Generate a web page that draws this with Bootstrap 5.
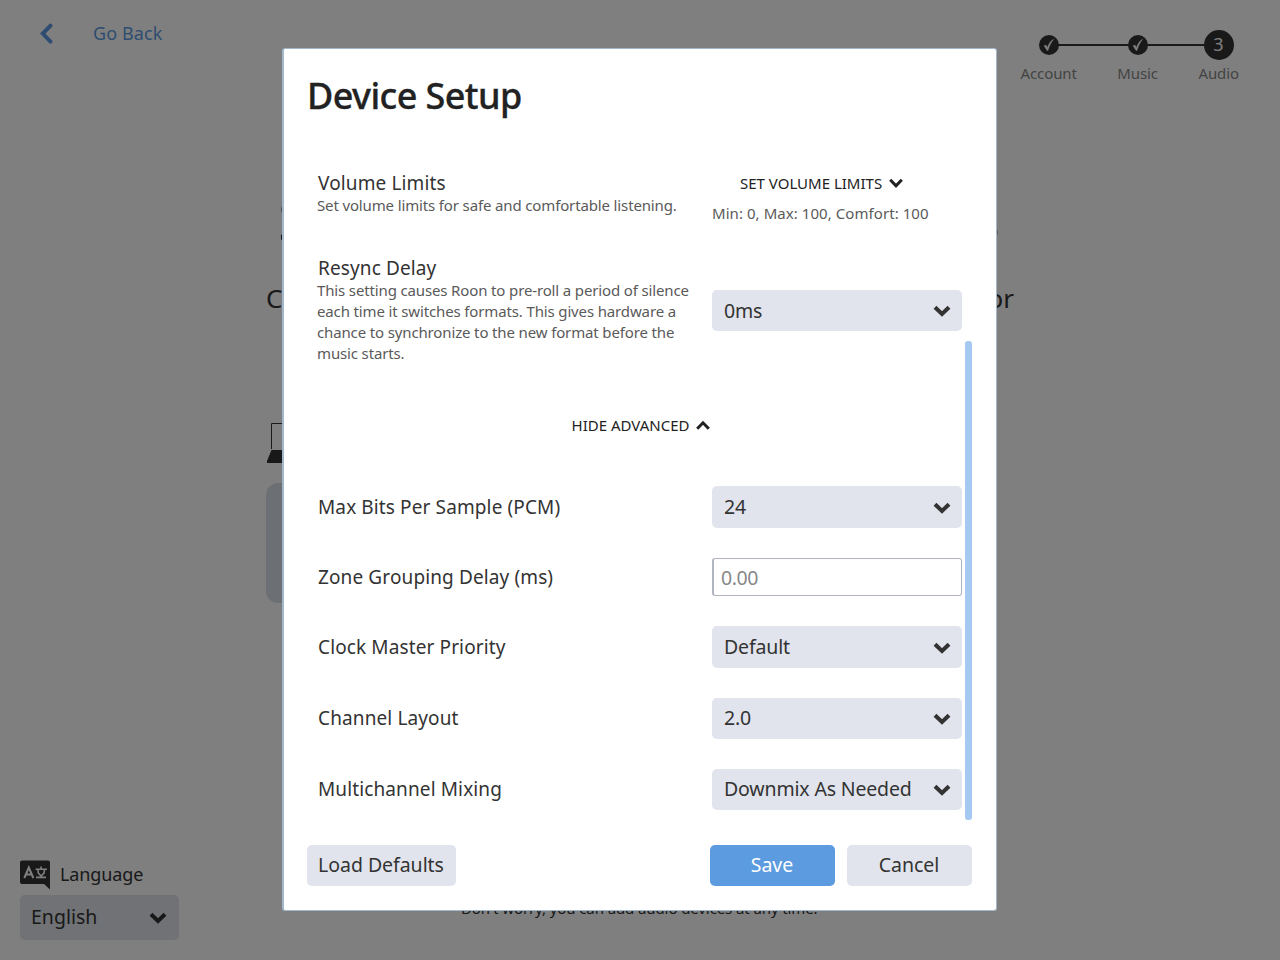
<!DOCTYPE html>
<html lang="en">
<head>
<meta charset="utf-8">
<meta name="viewport" content="width=device-width, initial-scale=1">
<title>Device Setup</title>
<link href="https://cdn.jsdelivr.net/npm/bootstrap@5.3.0/dist/css/bootstrap.min.css" rel="stylesheet">
<style>
  body { font-family: "Noto Sans", sans-serif; font-size: 20px; color: #333; background: #fff; height: 960px; overflow: hidden; }
  .screen { width: 1280px; height: 960px; }
  .top-bar { height: 84px; isolation: isolate; }
  .back-link { color: #5d9be0; font-size: 18px; line-height: 26px; padding: 20px 0 0 40px; gap: 40px; letter-spacing: .1px; }
  .steps { gap: 40.5px; padding: 30px 41px 0 0; font-size: 15px; letter-spacing: -.1px; }
  .step-marker { height: 30px; position: relative; z-index: 1; }
  .step-name { line-height: 20px; margin-top: 3px; color: #888; }
  .step-done::before { content: ""; position: absolute; left: 50%; top: 14px; width: 86px; height: 2px; background: #333; }
  .step-num { width: 30px; height: 30px; border-radius: 50%; background: #333; color: #fff; font-size: 18px; padding: 0 1px 1px 0; }
  .backdrop-text { width: 748px; margin-left: 266px; }
  .big-title { font-size: 58px; line-height: 60px; padding: 0 14px 0 12px; margin-top: 105px; color: #333; }
  .sub-title { font-size: 26px; line-height: 36px; margin-top: 31px; }
  .device-card { width: 720px; height: 120px; border-radius: 12px; background: #d8dfe8; margin-top: 20px; }
  .laptop { display: block; margin-top: 106px; }
  .lang { width: 159px; margin: 257px 0 0 20px; }
  .lang-name { font-size: 18px; line-height: 28px; height: 30px; gap: 10px; letter-spacing: -.1px; }
  .select-box { background: #e1e4ec; border-radius: 5px; padding: 0 11px 0 12px; width: 250px; height: 41px; font-size: 19.5px; line-height: 28px; letter-spacing: -.16px; color: #333; }
  .select-box svg { margin-top: 1px; }
  .lang .select-box { width: 159px; height: 45px; padding: 0 12px 0 11px; margin-top: 5px; letter-spacing: 0; }
  .lang .select-box span { margin-top: -1px; }
  .later-note { font-size: 15px; line-height: 20px; top: 898px; left: 461px; letter-spacing: -.1px; }
  .shade { background: rgba(0,0,0,.5); }
  .setup-dialog { left: 282px; top: 48px; width: 715px; height: 863px; background: #fff; border: 1px solid #a2b7c9; border-left-width: 2px; border-radius: 3px; padding: 23px 24px 24px 23px; }
  .setup-title { font-size: 36px; line-height: 48px; font-weight: 500; letter-spacing: -.6px; -webkit-text-stroke: .3px #222; color: #222; margin: 0; }
  .options { padding: 49px 0 0 11px; height: 700px; }
  .opt-name { font-size: 19px; line-height: 26px; letter-spacing: .12px; white-space: nowrap; }
  .opt-help { font-size: 15px; line-height: 21px; letter-spacing: -.14px; color: #5a5a5a; margin-left: -1px; white-space: nowrap; }
  .vol-sum { letter-spacing: .06px; padding-top: 7px; margin-top: 3px; }
  .opt-list { width: 644px; }
  .opt-volume { height: 85px; }
  .opt-volume .opt-name, .opt-resync .opt-name { padding-top: 1px; height: 26px; }
  .opt-resync { height: 110px; }
  .opt-resync .select-box { margin-top: 36px; }
  .side { width: 250px; }
  .link-caps { font-size: 15px; line-height: 20px; color: #222; gap: 7px; }
  .adv-toggle { height: 122px; gap: 7px; padding-left: 2px; }
  .adv-rows { gap: 30px; }
  .adv-rows .lift { margin-top: -2px; }
  .h42 { height: 42px; }
  .delay-input { width: 250px; height: 38px; border: 1px solid #b0b4bf; border-left-width: 2px; border-radius: 3px; padding: 1px 7px 0; color: #888; font-size: 19.5px; letter-spacing: -.4px; background: #fff; }
  .thumb { width: 7px; height: 479px; margin: 172px 0 0 3px; border-radius: 3px; background: #a5c9f1; }
  .act { background: #e1e4ec; color: #333; border: 0; border-radius: 5px; height: 41px; width: 125px; padding: 0 1px 2px 0; font-size: 19.5px; line-height: 38px; letter-spacing: -.04px; text-align: center; }
  .act-save { background: #5d9be0; color: #fff; }
  .act-load { width: 149px; }
</style>
</head>
<body>
<svg width="0" height="0" class="position-absolute">
  <defs>
    <symbol id="chev" viewBox="0 0 18 12"><path d="M2 2.200 9 9 16 2.200" fill="none" stroke="currentColor" stroke-width="4"/></symbol>
    <symbol id="chev-thin" viewBox="0 0 14 10"><path d="M1.200 1.800 7 7.800 12.800 1.800" fill="none" stroke="currentColor" stroke-width="3"/></symbol>
    <symbol id="tick" viewBox="0 0 20 20"><circle cx="10" cy="10" r="10" fill="#333"/><path d="M5 10.800 7 10 8.400 12.600C9.700 8.800 11.500 6 14.800 4.100 12.300 7.200 10.600 10.600 9 15.500L8 15.500Z" fill="#fff" stroke="#fff" stroke-width=".3"/></symbol>
  </defs>
</svg>
<div class="screen position-relative overflow-hidden">
  <header class="top-bar d-flex justify-content-between align-items-start">
    <a class="back-link d-flex align-items-center text-decoration-none" href="#">
      <svg width="13" height="22" viewBox="0 0 13 22"><path d="M10.500 3.600 2.800 11.600 10.500 19.600" fill="none" stroke="currentColor" stroke-width="4" stroke-linecap="round"/></svg>
      <span>Go Back</span>
    </a>
    <div class="steps d-flex">
      <div class="step-done position-relative text-center">
        <div class="step-marker d-flex align-items-center justify-content-center"><svg width="20" height="20"><use href="#tick"/></svg></div>
        <div class="step-name">Account</div>
      </div>
      <div class="step-done position-relative text-center">
        <div class="step-marker d-flex align-items-center justify-content-center"><svg width="20" height="20"><use href="#tick"/></svg></div>
        <div class="step-name">Music</div>
      </div>
      <div class="text-center">
        <div class="step-marker d-flex justify-content-center"><span class="step-num d-flex align-items-center justify-content-center">3</span></div>
        <div class="step-name">Audio</div>
      </div>
    </div>
  </header>
  <div class="backdrop-text">
    <div class="big-title d-flex justify-content-between"><span>S</span><span>s</span></div>
    <div class="sub-title d-flex justify-content-between"><span>C</span><span>or</span></div>
    <svg class="laptop" width="60" height="41" viewBox="0 0 60 41"><path d="M5.500 27V1.500H54.500V27" fill="none" stroke="#333"/><path d="M5.500 28H54.500L60 41H1V39Z" fill="#333"/></svg>
    <div class="device-card"></div>
  </div>
  <div class="lang">
    <div class="lang-name d-flex align-items-start">
      <svg width="30" height="30" viewBox="0 0 30 30"><path d="M2 .5H28Q30 .5 30 2.500V29.500L24 24H2Q0 24 0 22V2.500Q0 .5 2 .5Z" fill="#333"/><path d="M4.300 18 8.800 7.500 13.300 18M6 14.500H11.600" fill="none" stroke="#fff" stroke-width="2"/><path d="M21 6.500V9.500M15.500 9.300H27M18 10 18.300 13 21 16 24 13 24.500 10M16 17.400H26" fill="none" stroke="#fff" stroke-width="1.600"/></svg>
      <span>Language</span>
    </div>
    <div class="select-box d-flex align-items-center justify-content-between"><span>English</span><svg width="18" height="12"><use href="#chev"/></svg></div>
  </div>
  <div class="later-note position-absolute text-nowrap">Don't worry, you can add audio devices at any time.</div>

  <div class="shade position-absolute top-0 start-0 w-100 h-100"></div>

  <section class="setup-dialog position-absolute d-flex flex-column" role="dialog">
    <h1 class="setup-title">Device Setup</h1>
    <div class="options d-flex align-items-start">
      <div class="opt-list">
        <div class="opt-volume d-flex justify-content-between">
          <div>
            <div class="opt-name">Volume Limits</div>
            <div class="opt-help">Set volume limits for safe and comfortable listening.</div>
          </div>
          <div class="side">
            <div class="link-caps d-flex align-items-center ms-4 ps-1 pt-1">SET VOLUME LIMITS<svg width="14" height="10"><use href="#chev-thin"/></svg></div>
            <div class="opt-help vol-sum ms-0">Min: 0, Max: 100, Comfort: 100</div>
          </div>
        </div>
        <div class="opt-resync d-flex justify-content-between">
          <div>
            <div class="opt-name">Resync Delay</div>
            <div class="opt-help">This setting causes Roon to pre-roll a period of silence<br>each time it switches formats. This gives hardware a<br>chance to synchronize to the new format before the<br>music starts.</div>
          </div>
          <div class="select-box d-flex align-items-center justify-content-between"><span>0ms</span><svg width="18" height="12"><use href="#chev"/></svg></div>
        </div>
        <div class="adv-toggle link-caps d-flex align-items-center justify-content-center">HIDE ADVANCED<svg width="14" height="10" viewBox="0 0 14 10"><path d="M1.200 8.800 7 2.800 12.800 8.800" fill="none" stroke="currentColor" stroke-width="3"/></svg></div>
        <div class="adv-rows d-flex flex-column">
          <div class="d-flex justify-content-between align-items-center"><div class="opt-name">Max Bits Per Sample (PCM)</div><div class="select-box h42 d-flex align-items-center justify-content-between"><span>24</span><svg width="18" height="12"><use href="#chev"/></svg></div></div>
          <div class="d-flex justify-content-between align-items-center"><div class="opt-name">Zone Grouping Delay (ms)</div><div class="delay-input d-flex align-items-center">0.00</div></div>
          <div class="d-flex justify-content-between align-items-center"><div class="opt-name">Clock Master Priority</div><div class="select-box h42 d-flex align-items-center justify-content-between"><span>Default</span><svg width="18" height="12"><use href="#chev"/></svg></div></div>
          <div class="d-flex justify-content-between align-items-center"><div class="opt-name lift">Channel Layout</div><div class="select-box d-flex align-items-center justify-content-between"><span class="lift">2.0</span><svg width="18" height="12"><use href="#chev"/></svg></div></div>
          <div class="d-flex justify-content-between align-items-center"><div class="opt-name lift">Multichannel Mixing</div><div class="select-box d-flex align-items-center justify-content-between"><span class="lift">Downmix As Needed</span><svg width="18" height="12"><use href="#chev"/></svg></div></div>
        </div>
      </div>
      <div class="thumb flex-shrink-0"></div>
    </div>
    <footer class="d-flex mt-auto">
      <button class="act act-load me-auto">Load Defaults</button>
      <button class="act act-save me-2">Save</button>
      <button class="act ms-1">Cancel</button>
    </footer>
  </section>
</div>
<script src="https://cdn.jsdelivr.net/npm/bootstrap@5.3.0/dist/js/bootstrap.bundle.min.js"></script>
</body>
</html>
